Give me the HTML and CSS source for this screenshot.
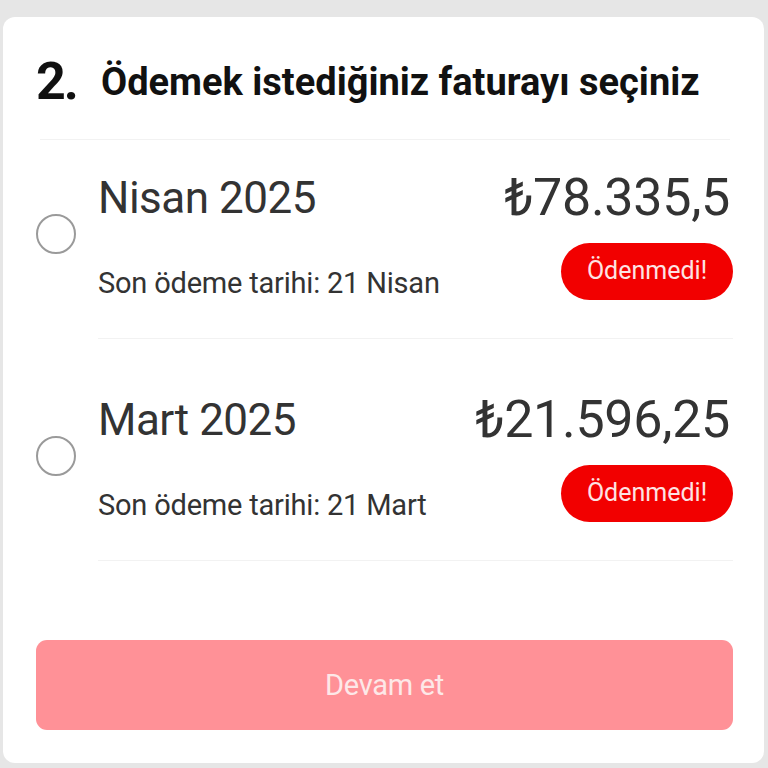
FILE: index.html
```html
<!DOCTYPE html>
<html>
<head>
<meta http-equiv="Content-Type" content="text/html; charset=UTF-8">
<title>Fatura seçimi</title>
<link rel="stylesheet" href="styles.css">
</head>
<body>
<div class="card">
	<div class="step">
		<span class="step_num">2.</span>
		<span class="step_title">Ödemek istediğiniz faturayı seçiniz</span>
	</div>
	<div class="bills">
		<label class="bill">
			<span class="radio"></span>
			<div class="bill_body">
				<div class="bill_month">Nisan 2025</div>
				<div class="bill_amount">₺78.335,5</div>
				<div class="bill_due">Son ödeme tarihi: 21 Nisan</div>
				<div class="bill_status"><span class="badge">Ödenmedi!</span></div>
			</div>
		</label>
		<label class="bill">
			<span class="radio"></span>
			<div class="bill_body">
				<div class="bill_month">Mart 2025</div>
				<div class="bill_amount">₺21.596,25</div>
				<div class="bill_due">Son ödeme tarihi: 21 Mart</div>
				<div class="bill_status"><span class="badge">Ödenmedi!</span></div>
			</div>
		</label>
	</div>
	<div class="actions">
		<button class="btn_next" disabled>Devam et</button>
	</div>
</div>
</body>
</html>
```

FILE: styles.css
```css
html, body {
	margin: 0;
	height: 100%;
}
body {
	background: #e6e6e6;
	font-family: Roboto, "Noto Sans", Arial, sans-serif;
	color: #333;
	padding: 17px 4px 5px 3px;
	box-sizing: border-box;
}
.card {
	background: #fff;
	border-radius: 12px;
	height: 100%;
	box-sizing: border-box;
	padding: 0 31px 0 33px;
	display: flex;
	flex-direction: column;
}
.step {
	height: 123px;
	display: flex;
	align-items: center;
	padding-top: 7px;
	box-sizing: border-box;
	margin: 0 3px 0 4px;
	border-bottom: 1px solid #f2f2f2;
}
.step_num {
	font-size: 52px;
	font-weight: 700;
	letter-spacing: -2px;
	color: #111;
	width: 65px;
	margin-left: -4px;
}
.step_title {
	font-size: 38px;
	font-weight: 700;
	color: #111;
}
.bill {
	--pad: 32px;
	display: flex;
	align-items: flex-start;
}
.bill + .bill {
	--pad: 55px;
}
.radio {
	width: 40px;
	height: 40px;
	border: 2px solid #9a9a9a;
	border-radius: 50%;
	box-sizing: border-box;
	flex: none;
	margin: calc(var(--pad) + 42px) 22px 0 0;
}
.bill_body {
	flex: 1;
	display: grid;
	grid-template-columns: 1fr auto;
	grid-template-rows: 52px 57px;
	row-gap: 19px;
	padding: var(--pad) 0 38px;
	border-bottom: 1px solid #f2f2f2;
}
.bill_month {
	font-size: 44px;
	line-height: 52px;
	letter-spacing: -0.5px;
}
.bill_amount {
	font-size: 52px;
	line-height: 52px;
	letter-spacing: -0.3px;
	text-align: right;
	padding-right: 3px;
}
.bill_due {
	align-self: end;
	font-size: 29px;
	line-height: 34px;
	letter-spacing: -0.2px;
}
.bill_status {
	text-align: right;
}
.badge {
	display: inline-block;
	width: 172px;
	height: 57px;
	line-height: 55px;
	border-radius: 29px;
	background: #f20000;
	color: #fde3e3;
	font-size: 25px;
	text-align: center;
}
.actions {
	margin-top: auto;
	padding-bottom: 33px;
}
.btn_next {
	display: block;
	width: 100%;
	height: 90px;
	border: none;
	border-radius: 11px;
	background: #ff9197;
	color: #fde8e8;
	font-family: Roboto, "Noto Sans", Arial, sans-serif;
	font-size: 29px;
	letter-spacing: -0.3px;
	padding: 0;
}
```
